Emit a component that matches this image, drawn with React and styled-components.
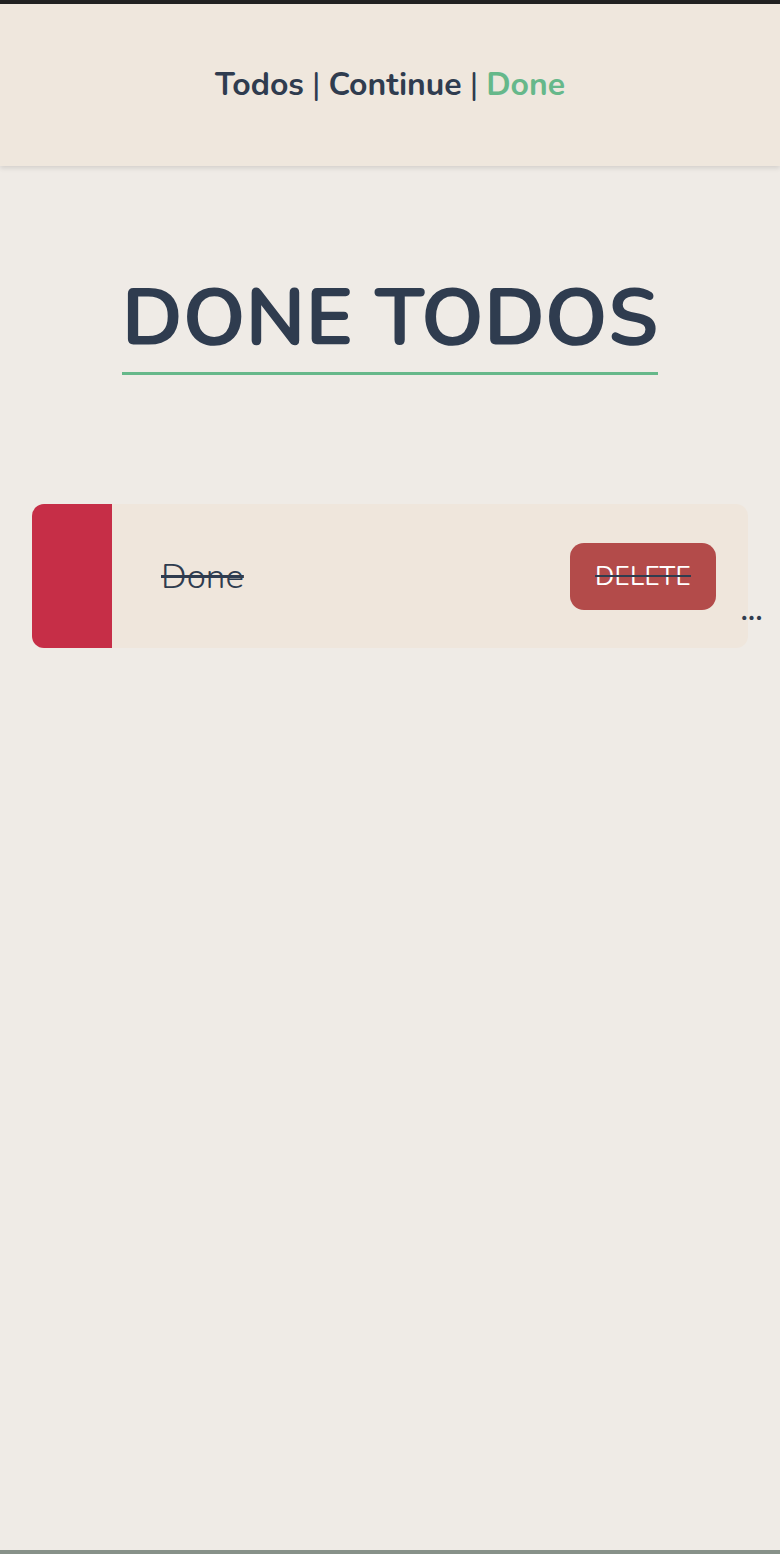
import React from 'react';
import styled, { createGlobalStyle } from 'styled-components';

const GlobalStyle = createGlobalStyle`
    html, body {
        margin: 0;
        padding: 0;
        background-color: #efebe6;
        font-family: 'Nunito', 'Lato', 'Noto Sans', sans-serif;
        color: #2f3c4f;
    }
`;

function App() {
    return (
        <>
            <GlobalStyle />
            <Page>
                <TopBar />
                <Header>
                    <Nav>
                        <NavLink>Todos</NavLink>
                        <Sep>|</Sep>
                        <NavLink>Continue</NavLink>
                        <Sep>|</Sep>
                        <NavLink active>Done</NavLink>
                    </Nav>
                </Header>
                <Main>
                    <Title>DONE TODOS</Title>
                    <List>
                        <TodoItem>
                            <Stripe />
                            <TodoBody>
                                <TodoText>Done</TodoText>
                                <DeleteButton>DELETE</DeleteButton>
                            </TodoBody>
                            <More>...</More>
                        </TodoItem>
                    </List>
                </Main>
                <BottomBar />
            </Page>
        </>
    );
}

const Page = styled.div`
    display: flex;
    flex-direction: column;
    min-height: 1554px;
`;

const TopBar = styled.div`
    height: 4px;
    background-color: #222222;
`;

const Header = styled.header`
    height: 162px;
    display: flex;
    align-items: center;
    justify-content: center;
    background-color: #efe7dd;
    box-shadow: 0 2px 5px rgba(0, 0, 0, 0.12);
    position: relative;
    z-index: 1;
`;

const Nav = styled.nav`
    display: flex;
    gap: 8px;
    font-size: 32px;
    font-weight: 700;
    margin-top: -2px;
`;

const NavLink = styled.span`
    color: ${(props) => (props.active ? '#66b88a' : '#2f3c4f')};
`;

const Sep = styled.span`
    font-weight: 400;
`;

const Main = styled.main`
    flex: 1;
    display: flex;
    flex-direction: column;
    align-items: center;
    padding-top: 103px;
`;

const Title = styled.h1`
    margin: 0;
    font-size: 80px;
    font-weight: 700;
    line-height: 100px;
    padding-bottom: 3px;
    border-bottom: 3px solid #66b88a;
`;

const List = styled.ul`
    list-style: none;
    margin: 129px 0 0 32px;
    padding: 0;
    width: 716px;
    align-self: flex-start;
`;

const TodoItem = styled.li`
    position: relative;
    display: flex;
    height: 144px;
    border-radius: 12px;
    background-color: #efe6dc;
    text-decoration: line-through;
`;

const Stripe = styled.div`
    width: 80px;
    flex-shrink: 0;
    background-color: #c62e47;
    border-radius: 12px 0 0 12px;
`;

const TodoBody = styled.div`
    flex: 1;
    display: flex;
    align-items: center;
    justify-content: space-between;
    padding: 0 32px 0 49px;
`;

const TodoText = styled.span`
    font-size: 35px;
    font-weight: 300;
`;

const DeleteButton = styled.button`
    width: 146px;
    height: 67px;
    border: none;
    border-radius: 14px;
    background-color: #b34b4a;
    color: #ffffff;
    font-family: inherit;
    font-size: 26px;
    font-weight: 400;
    letter-spacing: 0.3px;
    text-decoration: inherit;
`;

const More = styled.span`
    position: absolute;
    right: -15px;
    top: 93px;
    font-size: 28px;
    font-weight: 700;
    line-height: 1;
    letter-spacing: 0.5px;
    text-decoration: none;
`;

const BottomBar = styled.div`
    height: 4px;
    background-color: #879189;
`;

export default App;
